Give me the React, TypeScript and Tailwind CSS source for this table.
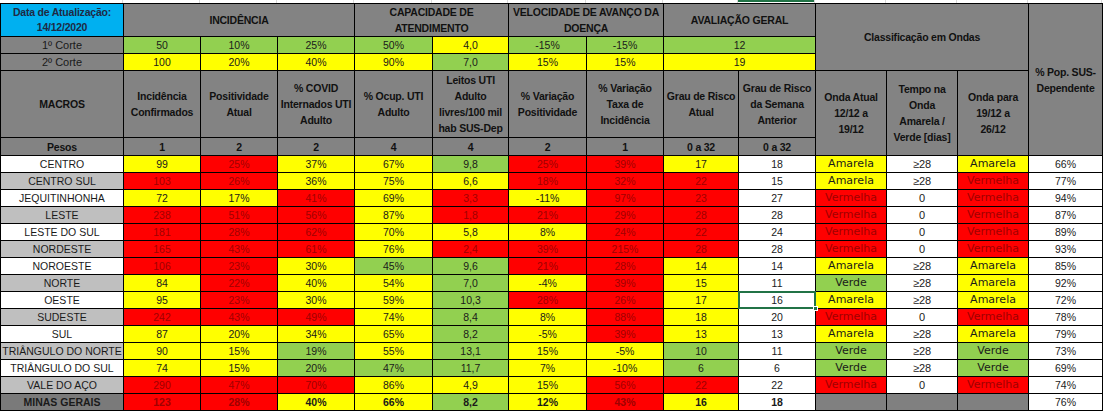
import React from 'react';

type Fill = 'Y' | 'R' | 'G' | 'W' | 'K';

const fill: Record<Fill, string> = {
  Y: 'bg-[#ffff00]',
  R: 'bg-[#ff0000] text-[#a00000]',
  G: 'bg-[#92d050]',
  W: 'bg-white',
  K: 'bg-[#808080]',
};

const ondaFill: Record<string, Fill> = { Amarela: 'Y', Vermelha: 'R', Verde: 'G' };

const widths = [123, 77, 77, 77, 78, 76, 78, 77, 75, 77, 71, 71, 71, 74];

const rows = [
  { name: 'CENTRO', cells: 'Y99 R25% Y37% Y67% G9,8 R25% R39% Y17 W18', onda: ['Amarela', '≥28', 'Amarela'], pop: '66%' },
  { name: 'CENTRO SUL', cells: 'R103 R26% Y36% Y75% Y6,6 R18% R32% R22 W15', onda: ['Amarela', '≥28', 'Vermelha'], pop: '77%' },
  { name: 'JEQUITINHONHA', cells: 'Y72 Y17% R41% Y69% R3,3 Y-11% R97% R23 W27', onda: ['Vermelha', '0', 'Vermelha'], pop: '94%' },
  { name: 'LESTE', cells: 'R238 R51% R56% Y87% R1,8 R21% R29% R28 W28', onda: ['Vermelha', '0', 'Vermelha'], pop: '87%' },
  { name: 'LESTE DO SUL', cells: 'R181 R28% R62% Y70% Y5,8 Y8% R24% R22 W24', onda: ['Vermelha', '0', 'Vermelha'], pop: '89%' },
  { name: 'NORDESTE', cells: 'R165 R43% R61% Y76% R2,4 R39% R215% R28 W28', onda: ['Vermelha', '0', 'Vermelha'], pop: '93%' },
  { name: 'NOROESTE', cells: 'R106 R23% Y30% G45% G9,6 R21% R28% Y14 W14', onda: ['Amarela', '≥28', 'Amarela'], pop: '85%' },
  { name: 'NORTE', cells: 'Y84 R22% Y40% Y54% G7,0 Y-4% R39% Y15 W11', onda: ['Verde', '≥28', 'Amarela'], pop: '92%' },
  { name: 'OESTE', cells: 'Y95 R23% Y30% Y59% G10,3 R28% R26% Y17 W16', onda: ['Amarela', '≥28', 'Amarela'], pop: '72%' },
  { name: 'SUDESTE', cells: 'R242 R43% R49% Y74% G8,4 Y8% R88% Y18 W20', onda: ['Vermelha', '0', 'Vermelha'], pop: '78%' },
  { name: 'SUL', cells: 'Y87 Y20% Y34% Y65% G8,2 Y-5% R39% Y13 W13', onda: ['Amarela', '≥28', 'Amarela'], pop: '79%' },
  { name: 'TRIÂNGULO DO NORTE', cells: 'Y90 Y15% G19% Y55% G13,1 Y15% Y-5% G10 W11', onda: ['Verde', '≥28', 'Verde'], pop: '73%' },
  { name: 'TRIÂNGULO DO SUL', cells: 'Y74 Y15% G20% G47% G11,7 Y7% Y-10% G6 W6', onda: ['Verde', '≥28', 'Verde'], pop: '69%' },
  { name: 'VALE DO AÇO', cells: 'R290 R47% R70% Y86% Y4,9 Y15% R56% R22 W22', onda: ['Vermelha', '0', 'Vermelha'], pop: '74%' },
];

const td = 'border border-black p-0 text-center align-middle whitespace-nowrap leading-[14px]';
const head = `${td} bg-[#838383] font-bold text-[10.5px] tracking-[-0.02em] !leading-[16px] text-[#111]`;
const onda = "font-['DejaVu_Sans',sans-serif] text-[11px]";

const App: React.FC = () => {
  return (
    <div className="w-[1106px] h-[415px] bg-white overflow-hidden font-['Liberation_Sans',Arial,sans-serif] text-[10.5px] text-[#1a1a1a]">
      {/* sheet gridlines above the table */}
      <div className="flex h-[3px]">
        {widths.map((w, i) => (
          <div key={i} style={{ width: w }} className="border-r border-[#d9d9d9]">
            {i === 9 && <div className="h-[2px] bg-[#217346]" />}
          </div>
        ))}
      </div>

      <table className="table-fixed border-collapse w-[1102px]">
        <colgroup>
          {widths.map((w, i) => (
            <col key={i} style={{ width: w }} />
          ))}
        </colgroup>
        <tbody>
          <tr className="h-[32px]">
            <td className={`${td} bg-[#00b0f0] font-bold text-[10.5px] tracking-[-0.02em] !leading-[15px] text-[#1f2a44]`}>
              Data de Atualização:
              <br />
              14/12/2020
            </td>
            <td colSpan={3} className={head}>INCIDÊNCIA</td>
            <td colSpan={2} className={`${head} !leading-[15px]`}>
              CAPACIDADE DE
              <br />
              ATENDIMENTO
            </td>
            <td colSpan={2} className={`${head} !leading-[15px]`}>
              VELOCIDADE DE AVANÇO DA
              <br />
              DOENÇA
            </td>
            <td colSpan={2} className={head}>AVALIAÇÃO GERAL</td>
            <td colSpan={3} rowSpan={3} className={head}>Classificação em Ondas</td>
            <td rowSpan={5} className={head}>
              % Pop. SUS-
              <br />
              Dependente
            </td>
          </tr>

          <tr className="h-[17px]">
            <td className={`${td} bg-[#838383] text-[11px]`}>1º Corte</td>
            <td className={`${td} ${fill.G}`}>50</td>
            <td className={`${td} ${fill.G}`}>10%</td>
            <td className={`${td} ${fill.G}`}>25%</td>
            <td className={`${td} ${fill.G}`}>50%</td>
            <td className={`${td} ${fill.Y}`}>4,0</td>
            <td className={`${td} ${fill.G}`}>-15%</td>
            <td className={`${td} ${fill.G}`}>-15%</td>
            <td colSpan={2} className={`${td} ${fill.G}`}>12</td>
          </tr>
          <tr className="h-[17px]">
            <td className={`${td} bg-[#838383] text-[11px]`}>2º Corte</td>
            <td className={`${td} ${fill.Y}`}>100</td>
            <td className={`${td} ${fill.Y}`}>20%</td>
            <td className={`${td} ${fill.Y}`}>40%</td>
            <td className={`${td} ${fill.Y}`}>90%</td>
            <td className={`${td} ${fill.G}`}>7,0</td>
            <td className={`${td} ${fill.Y}`}>15%</td>
            <td className={`${td} ${fill.Y}`}>15%</td>
            <td colSpan={2} className={`${td} ${fill.Y}`}>19</td>
          </tr>

          <tr className="h-[67px]">
            <td className={head}>MACROS</td>
            <td className={head}>Incidência<br />Confirmados</td>
            <td className={head}>Positividade<br />Atual</td>
            <td className={head}>% COVID<br />Internados UTI<br />Adulto</td>
            <td className={head}>% Ocup. UTI<br />Adulto</td>
            <td className={head}>Leitos UTI<br />Adulto<br />livres/100 mil<br />hab SUS-Dep</td>
            <td className={head}>% Variação<br />Positividade</td>
            <td className={head}>% Variação<br />Taxa de<br />Incidência</td>
            <td className={head}>Grau de Risco<br />Atual</td>
            <td className={head}>Grau de Risco<br />da Semana<br />Anterior</td>
            <td rowSpan={2} className={head}>Onda Atual<br />12/12 a<br />19/12</td>
            <td rowSpan={2} className={head}>Tempo na<br />Onda<br />Amarela /<br />Verde [dias]</td>
            <td rowSpan={2} className={head}>Onda para<br />19/12 a<br />26/12</td>
          </tr>
          <tr className="h-[18px]">
            <td className={head}>Pesos</td>
            {['1', '2', '2', '4', '4', '2', '1', '0 a 32', '0 a 32'].map((p, i) => (
              <td key={i} className={head}>{p}</td>
            ))}
          </tr>

          {rows.map((r, ri) => (
            <tr key={r.name} className="h-[17px]">
              <td className={`${td} ${ri % 2 ? 'bg-[#bfbfbf]' : 'bg-white'}`}>{r.name}</td>
              {r.cells.split(' ').map((c, ci) => (
                <td key={ci} className={`${td} ${fill[c[0] as Fill]} ${r.name === 'OESTE' && ci === 8 ? 'relative' : ''}`}>
                  {c.slice(1)}
                  {r.name === 'OESTE' && ci === 8 && (
                    <div className="absolute -inset-px border-2 border-[#217346]">
                      <div className="absolute -right-[4px] -bottom-[4px] w-[5px] h-[5px] bg-[#217346] border border-white" />
                    </div>
                  )}
                </td>
              ))}
              <td className={`${td} ${onda} ${fill[ondaFill[r.onda[0]]]}`}>{r.onda[0]}</td>
              <td className={`${td} text-[11px] bg-white`}>{r.onda[1]}</td>
              <td className={`${td} ${onda} ${fill[ondaFill[r.onda[2]]]}`}>{r.onda[2]}</td>
              <td className={`${td} bg-white`}>{r.pop}</td>
            </tr>
          ))}

          <tr className="h-[17px] font-bold">
            <td className={`${td} bg-[#7a7a7a]`}>MINAS GERAIS</td>
            {'R123 R28% Y40% Y66% G8,2 Y12% R43% Y16 W18'.split(' ').map((c, ci) => (
              <td key={ci} className={`${td} ${fill[c[0] as Fill]}`}>{c.slice(1)}</td>
            ))}
            <td className={`${td} ${fill.K}`} />
            <td className={`${td} ${fill.K}`} />
            <td className={`${td} ${fill.K}`} />
            <td className={`${td} bg-white font-normal`}>76%</td>
          </tr>
        </tbody>
      </table>
    </div>
  );
};

export default App;
